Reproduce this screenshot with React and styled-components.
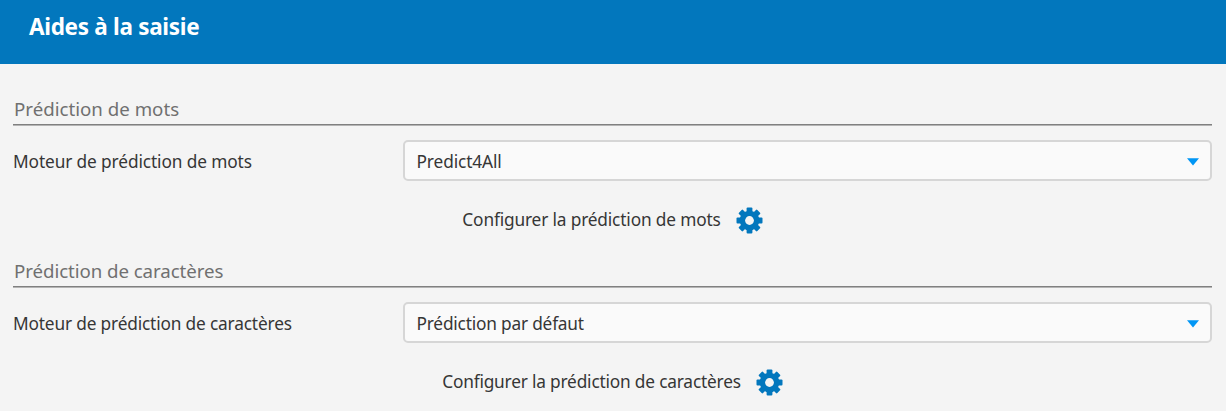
import React from "react";
import styled, { createGlobalStyle } from "styled-components";

const GlobalStyle = createGlobalStyle`
  *, *::before, *::after { box-sizing: border-box; }
  body {
    margin: 0;
    background: #f4f4f4;
    color: #363636;
    font-family: "Segoe UI", "Noto Sans", "Open Sans", sans-serif;
    font-size: 17.3px;
    line-height: 24px;
  }
`;

const Page = styled.main`
  min-height: 411px;
  overflow: hidden;
`;

const Header = styled.header`
  height: 64px;
  padding: 10px 29px;
  background: #0277bd;
`;

const Title = styled.h1`
  margin: 0;
  color: #fff;
  font-size: 22.5px;
  font-weight: 700;
  line-height: 34px;
  letter-spacing: -0.3px;
`;

const Content = styled.div`
  padding: 31px 14px 0 13px;
`;

const Section = styled.section`
  height: 162px;
`;

const SectionTitle = styled.h2`
  height: 31px;
  margin: 0 0 14px;
  padding-left: 1px;
  border-bottom: 1px solid #b4b4b4;
  box-shadow: inset 0 -1px #808080;
  color: #707070;
  font-size: 18.7px;
  font-weight: 400;
  line-height: 28px;
`;

const Text = styled.span`
  white-space: nowrap;
  letter-spacing: ${(p) => p.$spacing || 0}px;
`;

const Row = styled.div`
  display: grid;
  grid-template-columns: 390px 1fr;
  align-items: center;
`;

const Label = styled(Text)`
  padding-top: 2px;
`;

const Select = styled.div`
  display: flex;
  align-items: center;
  justify-content: space-between;
  height: 41px;
  padding: 2px 11.5px 0 11.5px;
  border: 2px solid #d6d6d6;
  border-radius: 5px;
  background: #fafafa;
`;

const Arrow = styled.svg`
  display: block;
  width: 12px;
  height: 8px;
  fill: #0096f5;
`;

const Configure = styled.button`
  display: flex;
  align-items: center;
  justify-content: center;
  gap: 15px;
  width: 100%;
  height: 26px;
  margin-top: 26px;
  padding: 0;
  border: 0;
  background: none;
  color: inherit;
  font: inherit;
`;

const Gear = styled.svg`
  display: block;
  flex: none;
  width: 27px;
  height: 27px;
  fill: #0277bd;
`;

function GearIcon() {
  return (
    <Gear viewBox="-13.5 -13.5 27 27" aria-hidden="true">
      {[0, 45, 90, 135].map((angle) => (
        <rect key={angle} x="-2.9" y="-13" width="5.8" height="26" rx="1" transform={`rotate(${angle})`} />
      ))}
      <circle r="9.8" />
      <circle r="4.4" fill="#f4f4f4" />
    </Gear>
  );
}

const sections = [
  {
    title: { text: "Prédiction de mots", spacing: 0 },
    label: { text: "Moteur de prédiction de mots", spacing: -0.12 },
    value: { text: "Predict4All", spacing: -0.12 },
    action: { text: "Configurer la prédiction de mots", spacing: -0.16 },
  },
  {
    title: { text: "Prédiction de caractères", spacing: -0.07 },
    label: { text: "Moteur de prédiction de caractères", spacing: -0.17 },
    value: { text: "Prédiction par défaut", spacing: -0.2 },
    action: { text: "Configurer la prédiction de caractères", spacing: -0.19 },
  },
];

export default function App() {
  return (
    <Page>
      <GlobalStyle />
      <Header>
        <Title>Aides à la saisie</Title>
      </Header>
      <Content>
        {sections.map(({ title, label, value, action }) => (
          <Section key={title.text}>
            <SectionTitle>
              <Text $spacing={title.spacing}>{title.text}</Text>
            </SectionTitle>
            <Row>
              <Label $spacing={label.spacing}>{label.text}</Label>
              <Select>
                <Text $spacing={value.spacing}>{value.text}</Text>
                <Arrow viewBox="0 0 12 8"><path d="M0 0.3H12L6 7.5Z" /></Arrow>
              </Select>
            </Row>
            <Configure>
              <Text $spacing={action.spacing}>{action.text}</Text>
              <GearIcon />
            </Configure>
          </Section>
        ))}
      </Content>
    </Page>
  );
}
